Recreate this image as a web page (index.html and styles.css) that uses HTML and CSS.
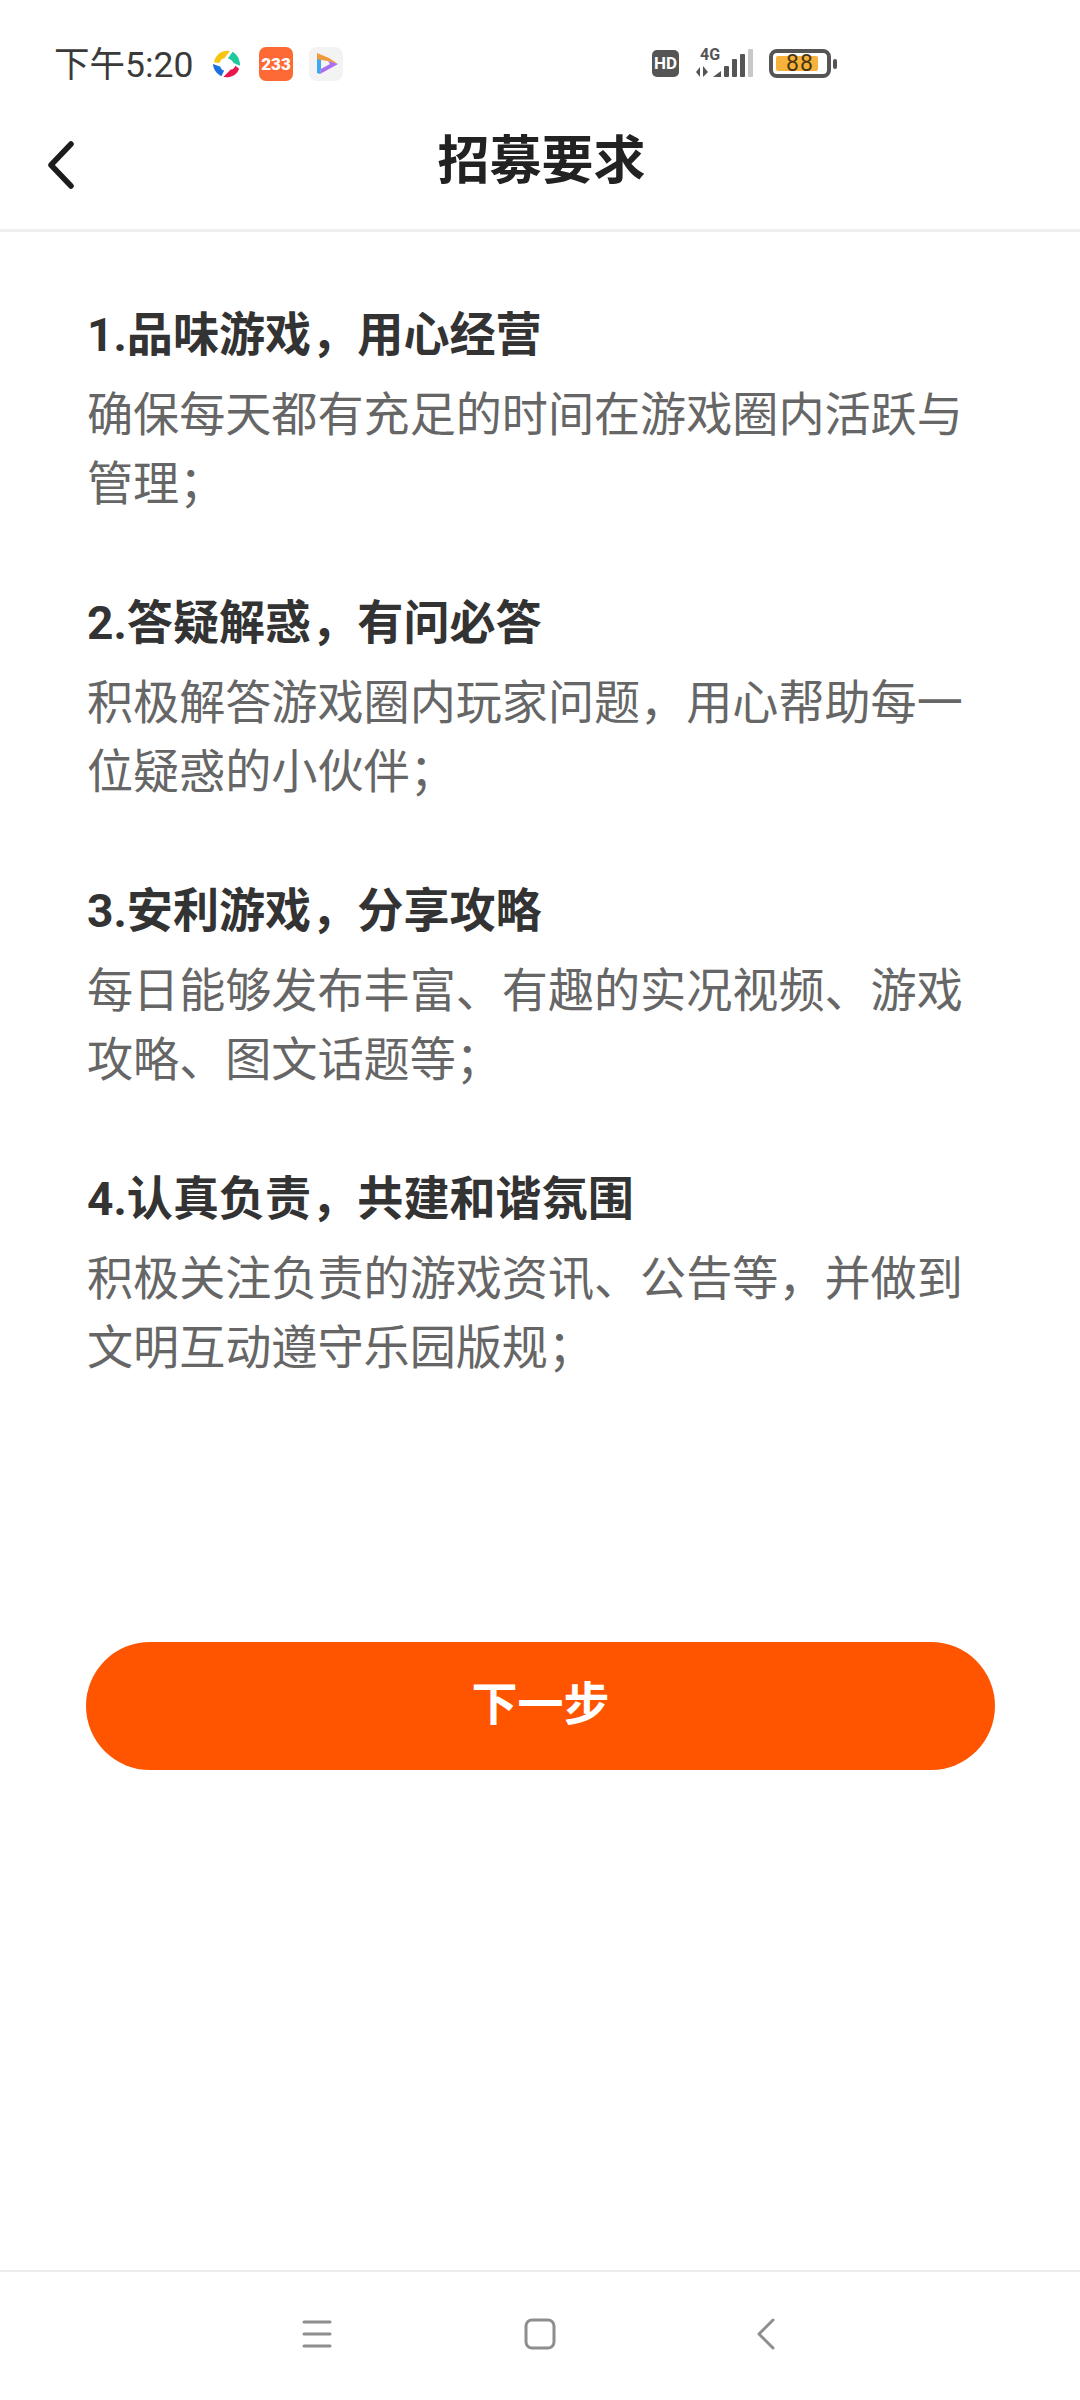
FILE: index.html
```html
<!DOCTYPE html>
<html lang="zh-CN">
<head>
<meta charset="utf-8">
<title>招募要求</title>
<link rel="stylesheet" href="styles.css">
</head>
<body>
<div class="screen">
  <div class="status">
    <span class="time">下午5:20</span>
    <svg class="app app-first" viewBox="0 0 30 30" width="28" height="28">
      <path d="M1 13C3 5 9 0 18 1L12 9C9 9 8 11 7 14Z" fill="#f7c410"/>
      <path d="M21 2C26 5 29 10 29 17L22 14C21 11 19 10 16 9Z" fill="#1fc99b"/>
      <path d="M28 20C26 26 20 30 11 29L19 21C22 21 23 19 24 17Z" fill="#e8184f"/>
      <path d="M9 28C4 26 0 20 0 15L8 18C8 20 10 22 12 22Z" fill="#1c6fe0"/>
    </svg>
    <span class="app app-233">233</span>
    <span class="app app-play">
      <svg viewBox="0 0 34 34" width="34" height="34">
        <path d="M8 6L20 11L29 17L19 14L12 13L8 13Z" fill="#ef9a3c"/>
        <path d="M8 12L12 13V22L11 27L8 26Z" fill="#3fa7ee"/>
        <path d="M11 27L29 17L19 14L21 17L12 22Z" fill="#a96df0"/>
      </svg>
    </span>
    <span class="status-right">
      <span class="hd">HD</span>
      <svg class="signal" viewBox="0 0 58 32" width="58" height="32">
        <text x="4" y="14" class="net">4G</text>
        <path d="M0 26L4 21V31ZM7 20V31L12 26Z" fill="#555"/>
        <path d="M17 31L25 25V31Z" fill="#555"/>
        <rect x="28" y="20" width="5" height="11" rx="1" fill="#555"/>
        <rect x="36" y="13" width="5" height="18" rx="1" fill="#555"/>
        <rect x="44" y="8" width="5" height="23" rx="1" fill="#555"/>
        <rect x="52" y="3" width="5" height="28" rx="1" fill="#c8c8c8"/>
      </svg>
      <span class="battery"><span class="level">88</span></span>
      <span class="nub"></span>
    </span>
  </div>
  <header class="top">
    <svg class="back" viewBox="0 0 30 48" width="30" height="48">
      <path d="M25 3L5 24L25 45" fill="none" stroke="#1c1c1c" stroke-width="5.5" stroke-linecap="round" stroke-linejoin="round"/>
    </svg>
    <h1>招募要求</h1>
  </header>
  <main class="content">
    <section class="item">
      <h2>1.品味游戏，用心经营</h2>
      <p>确保每天都有充足的时间在游戏圈内活跃与管理；</p>
    </section>
    <section class="item">
      <h2>2.答疑解惑，有问必答</h2>
      <p>积极解答游戏圈内玩家问题，用心帮助每一位疑惑的小伙伴；</p>
    </section>
    <section class="item">
      <h2>3.安利游戏，分享攻略</h2>
      <p>每日能够发布丰富、有趣的实况视频、游戏攻略、图文话题等；</p>
    </section>
    <section class="item">
      <h2>4.认真负责，共建和谐氛围</h2>
      <p>积极关注负责的游戏资讯、公告等，并做到文明互动遵守乐园版规；</p>
    </section>
    <button class="next" type="button">下一步</button>
  </main>
  <nav class="nav">
    <svg class="nav-menu" viewBox="0 0 30 30" width="30" height="30"><path d="M2 3H28M2 15H28M2 27H28" stroke="#8e8e8e" stroke-width="3" stroke-linecap="round"/></svg>
    <svg class="nav-home" viewBox="0 0 32 32" width="32" height="32"><rect x="2" y="2" width="28" height="28" rx="6" fill="none" stroke="#8e8e8e" stroke-width="3"/></svg>
    <svg class="nav-back" viewBox="0 0 20 32" width="20" height="32"><path d="M17 2L3 16L17 30" fill="none" stroke="#8e8e8e" stroke-width="3" stroke-linecap="round" stroke-linejoin="round"/></svg>
  </nav>
</div>
</body>
</html>
```
FILE: styles.css
```css
* { box-sizing: border-box; }
html, body { margin: 0; padding: 0; background: #fff; }
.screen {
  width: 1080px;
  height: 2400px;
  display: flex;
  flex-direction: column;
  font-family: "Roboto", "Noto Sans CJK SC", sans-serif;
  overflow: hidden;
}
.status {
  height: 128px;
  padding: 44px 0 0 54px;
  display: flex;
  align-items: flex-start;
  color: #3a3a3a;
}
.time { font-size: 35.5px; line-height: 42px; width: 159px; flex: none; }
.app { flex: none; }
.app-first { margin-top: 6px; }
.app-233 {
  width: 34px; height: 34px; margin-left: 18px; margin-top: 3px;
  background: #fd6a35; border-radius: 7px; color: #fff;
  font: 900 17px/34px "Roboto", sans-serif; text-align: center;
}
.app-play {
  width: 34px; height: 34px; margin-left: 16px; margin-top: 3px;
  background: #f3f3f3; border-radius: 8px;
}
.app-play svg { display: block; }
.status-right { display: flex; align-items: flex-start; margin-left: 309px; }
.hd {
  width: 27px; height: 27px; margin-top: 6px; background: #555; border-radius: 5px;
  color: #fff; font: 700 17px/27px "Roboto", sans-serif; text-align: center;
}
.signal { margin: 2px 0 0 17px; }
.net { font: 700 16px "Roboto", sans-serif; fill: #555; }
.battery {
  width: 62px; height: 29px; margin: 5px 0 0 15px;
  border: 4px solid #555; border-radius: 8px; padding: 3px 9px 3px 3px;
  display: flex;
}
.level {
  flex: 1; background: #f7b23b; border-radius: 2px; color: #4a3510;
  font: 400 23px/15px "Roboto", sans-serif; letter-spacing: 1px; text-align: center; padding-left: 6px;
}
.nub { width: 4px; height: 10px; margin: 15px 0 0 2px; background: #555; border-radius: 2px; }
.top {
  height: 104px;
  padding-left: 3px;
  border-bottom: 3px solid #eeeeee;
  position: relative;
  display: flex;
  align-items: flex-start;
  justify-content: center;
}
.back { position: absolute; left: 46px; top: 13px; }
h1 { margin: 4px 0 0; font-size: 52px; line-height: 60px; font-weight: 700; color: #222; }
.content { flex: 1; padding: 69px 86px 0 87px; }
.item { margin-bottom: 70px; }
h2 { margin: 0 0 11px; font-size: 46.1px; line-height: 69px; font-weight: 700; color: #333; }
p { margin: 0; font-size: 46.1px; line-height: 69px; color: #666; width: 880px; }
.next {
  display: block;
  width: 909px;
  height: 128px;
  margin: 259px 0 0 -1px;
  padding: 0 0 12px;
  border: 0;
  border-radius: 64px;
  background: #ff5500;
  color: #fff;
  font: 700 46px "Roboto", "Noto Sans CJK SC", sans-serif;
}
.nav {
  height: 130px;
  border-top: 2px solid #ececec;
  display: flex;
  align-items: center;
  padding: 0 0 4px 302px;
}
.nav-home { margin-left: 192px; }
.nav-back { margin-left: 200px; }
```
